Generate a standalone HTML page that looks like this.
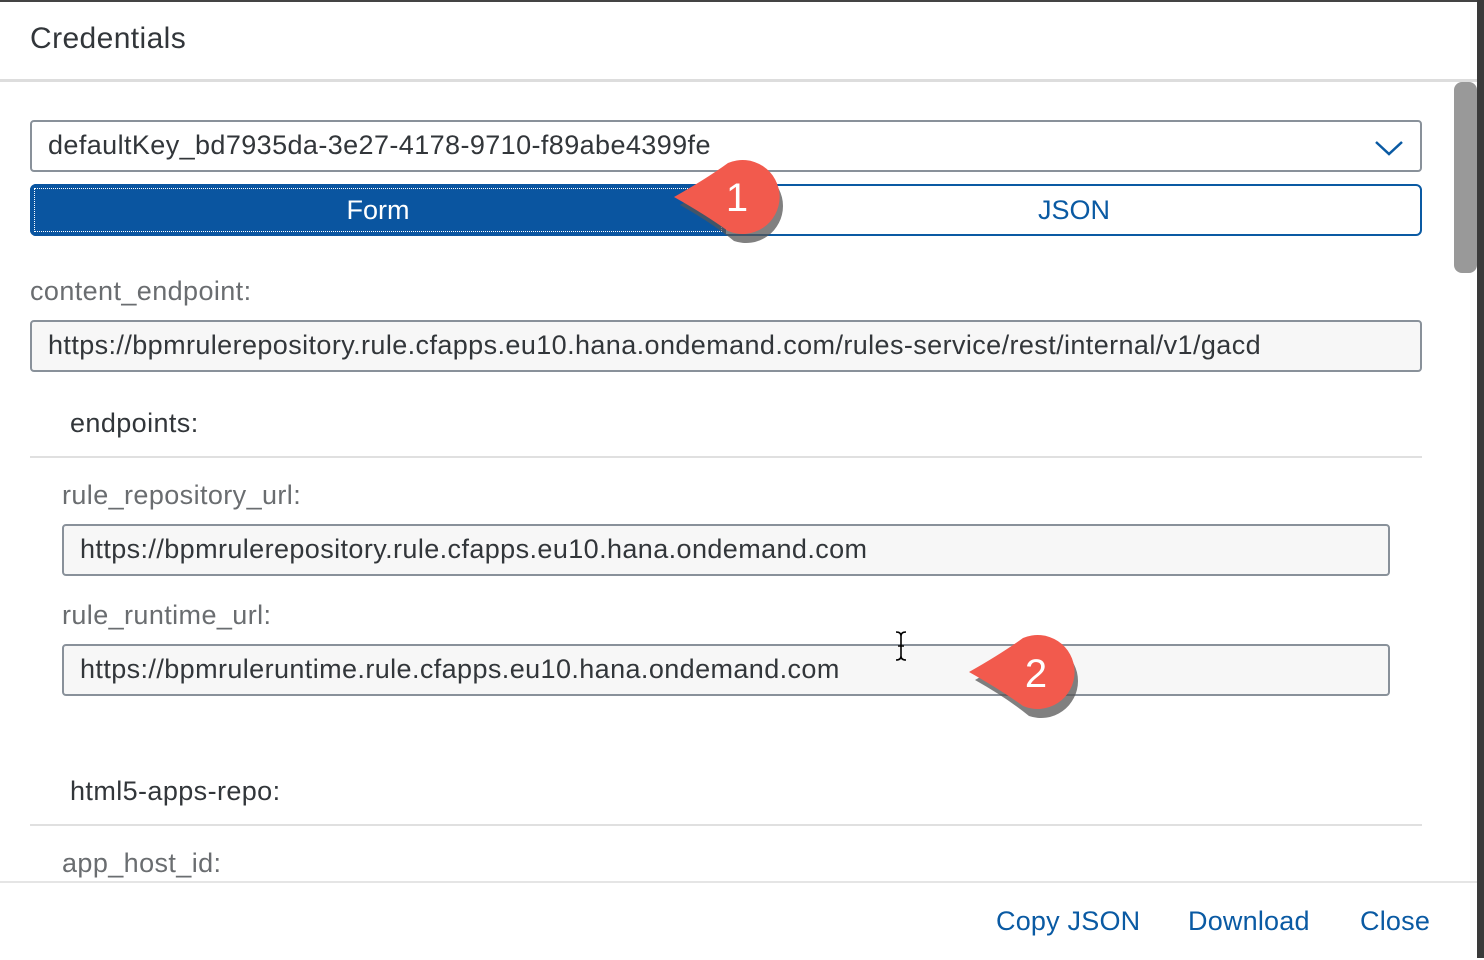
<!DOCTYPE html>
<html><head><style>
body{margin:0;width:1484px;height:958px;overflow:hidden;background:#fff;font-family:"Liberation Sans",sans-serif;position:relative}
.a{position:absolute}
.inp{position:absolute;box-sizing:border-box;border:2px solid #89919a;border-radius:4px;background:#f7f7f7;font-size:27px;letter-spacing:0.4px;color:#32363a;padding-left:16px;line-height:46px;height:52px}
.lbl{position:absolute;font-size:27px;letter-spacing:0.4px;color:#6a6d70}
.hd{position:absolute;font-size:27px;letter-spacing:0.4px;color:#32363a}
.ln{position:absolute;left:30px;width:1392px;height:2px;background:#e0e0e0}
.btn{position:absolute;top:906px;font-size:27px;letter-spacing:0.2px;color:#0a5aa3}
</style></head><body>
<div class="a" style="left:0;top:0;width:1484px;height:2px;background:#444"></div>
<div class="a" style="left:1477px;top:0;width:7px;height:958px;background:#3a3a3a"></div>
<div class="a" style="left:30px;top:22px;font-size:30px;letter-spacing:0.4px;color:#32363a">Credentials</div>
<div class="a" style="left:0;top:79px;width:1477px;height:3px;background:#ddd"></div>
<div class="a" style="left:1454px;top:82px;width:23px;height:191px;background:#999;border-radius:8px"></div>
<div class="inp" style="left:30px;top:120px;width:1392px;background:#fff">defaultKey_bd7935da-3e27-4178-9710-f89abe4399fe</div>
<svg class="a" style="left:1374px;top:140px" width="30" height="16"><path d="M2 2 L15 14 L28 2" stroke="#0a5aa3" stroke-width="2.5" fill="none"/></svg>
<div class="a" style="left:30px;top:184px;width:1392px;height:52px;box-sizing:border-box;border:2px solid #0a5aa3;border-radius:6px;background:#fff"></div>
<div class="a" style="left:30px;top:184px;width:696px;height:52px;background:#0a55a0;border-radius:6px 0 0 6px;box-sizing:border-box;border:2px solid #0a55a0"><div style="position:absolute;inset:2px;border:1px dotted #fff"></div></div>
<div class="a" style="left:30px;top:195px;width:696px;text-align:center;font-size:27px;color:#fff">Form</div>
<div class="a" style="left:726px;top:195px;width:696px;text-align:center;font-size:27px;color:#0a5aa3">JSON</div>
<div class="lbl" style="left:30px;top:276px">content_endpoint:</div>
<div class="inp" style="left:30px;top:320px;width:1392px">https://bpmrulerepository.rule.cfapps.eu10.hana.ondemand.com/rules-service/rest/internal/v1/gacd</div>
<div class="hd" style="left:70px;top:408px">endpoints:</div>
<div class="ln" style="top:456px"></div>
<div class="lbl" style="left:62px;top:480px">rule_repository_url:</div>
<div class="inp" style="left:62px;top:524px;width:1328px">https://bpmrulerepository.rule.cfapps.eu10.hana.ondemand.com</div>
<div class="lbl" style="left:62px;top:600px">rule_runtime_url:</div>
<div class="inp" style="left:62px;top:644px;width:1328px">https://bpmruleruntime.rule.cfapps.eu10.hana.ondemand.com</div>
<div class="hd" style="left:70px;top:776px">html5-apps-repo:</div>
<div class="ln" style="top:824px"></div>
<div class="lbl" style="left:62px;top:848px">app_host_id:</div>
<div class="a" style="left:0;top:881px;width:1477px;height:77px;background:#fff;border-top:2px solid #e5e5e5"></div>
<div class="btn" style="left:996px">Copy JSON</div>
<div class="btn" style="left:1188px">Download</div>
<div class="btn" style="left:1360px">Close</div>
<svg class="a" style="left:660px;top:155px" width="130" height="90">
<path d="M18 46 Q50 28 72 12 A37 37 0 1 1 72 82 Q50 64 18 46Z" fill="#555" opacity=".75" transform="translate(2,4)"/>
<path d="M14 42 Q46 24 68 8 A37 37 0 1 1 68 76 Q46 60 14 42Z" fill="#f25a4d"/>
<text x="77" y="56" font-size="40" fill="#fff" text-anchor="middle" font-family="Liberation Sans">1</text>
</svg>
<svg class="a" style="left:955px;top:630px" width="130" height="90">
<path d="M18 46 Q50 28 72 12 A37 37 0 1 1 72 82 Q50 64 18 46Z" fill="#555" opacity=".75" transform="translate(2,4)"/>
<path d="M14 42 Q46 24 68 8 A37 37 0 1 1 68 76 Q46 60 14 42Z" fill="#f25a4d"/>
<text x="81" y="57" font-size="40" fill="#fff" text-anchor="middle" font-family="Liberation Sans">2</text>
</svg>
<svg class="a" style="left:892px;top:630px" width="20" height="32"><path d="M4 2 Q9 2 9 6 L9 26 Q9 30 4 30 M14 2 Q9 2 9 6 M9 26 Q9 30 14 30 M6 16 H12" stroke="#000" stroke-width="1.6" fill="none"/></svg>
</body></html>
